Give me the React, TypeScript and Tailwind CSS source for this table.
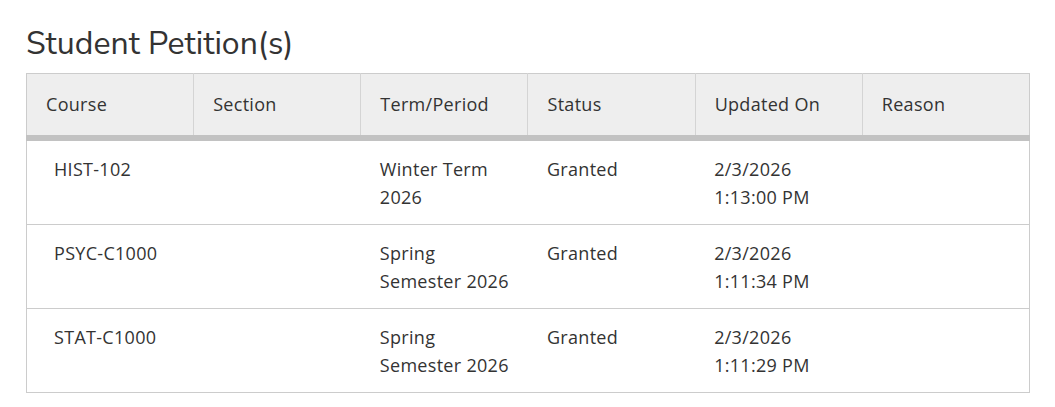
const rows = [
  { course: "HIST-102", section: "", term: ["Winter Term", "2026"], status: "Granted", updated: ["2/3/2026", "1:13:00 PM"], reason: "" },
  { course: "PSYC-C1000", section: "", term: ["Spring", "Semester 2026"], status: "Granted", updated: ["2/3/2026", "1:11:34 PM"], reason: "" },
  { course: "STAT-C1000", section: "", term: ["Spring", "Semester 2026"], status: "Granted", updated: ["2/3/2026", "1:11:29 PM"], reason: "" },
]

const headers = ["Course", "Section", "Term/Period", "Status", "Updated On", "Reason"]

export default function App() {
  return (
    <div className="min-h-screen bg-white px-[26px] pt-[22px] text-[#333333] font-['Open_Sans',sans-serif]">
      <h2 className="text-[32px] leading-[44px] mb-[7px] font-['Nunito_Sans','Open_Sans',sans-serif]">Student Petition(s)</h2>
      <table className="w-[1004px] table-fixed border-collapse border border-[#cccccc] text-[18px] tracking-[0.3px]">
        <thead>
          <tr className="bg-[#eeeeee] border-b-[6px] border-[#c2c2c2]">
            {headers.map((h, i) => (
              <th
                key={h}
                className={`h-[64px] px-[19px] text-left font-normal align-middle ${i > 0 ? "border-l border-[#d4d4d4]" : ""}`}
              >
                {h}
              </th>
            ))}
          </tr>
        </thead>
        <tbody>
          {rows.map((r) => (
            <tr key={r.course} className="border-b border-[#cccccc] align-top leading-[28px]">
              <td className="pl-[27px] pr-[19px] pt-[14px] pb-[13px]">{r.course}</td>
              <td className="px-[19px] pt-[14px] pb-[13px]">{r.section}</td>
              <td className="px-[19px] pt-[14px] pb-[13px]">
                {r.term[0]}
                <br />
                {r.term[1]}
              </td>
              <td className="px-[19px] pt-[14px] pb-[13px]">{r.status}</td>
              <td className="px-[19px] pt-[14px] pb-[13px]">
                {r.updated[0]}
                <br />
                {r.updated[1]}
              </td>
              <td className="px-[19px] pt-[14px] pb-[13px]">{r.reason}</td>
            </tr>
          ))}
        </tbody>
      </table>
    </div>
  )
}
